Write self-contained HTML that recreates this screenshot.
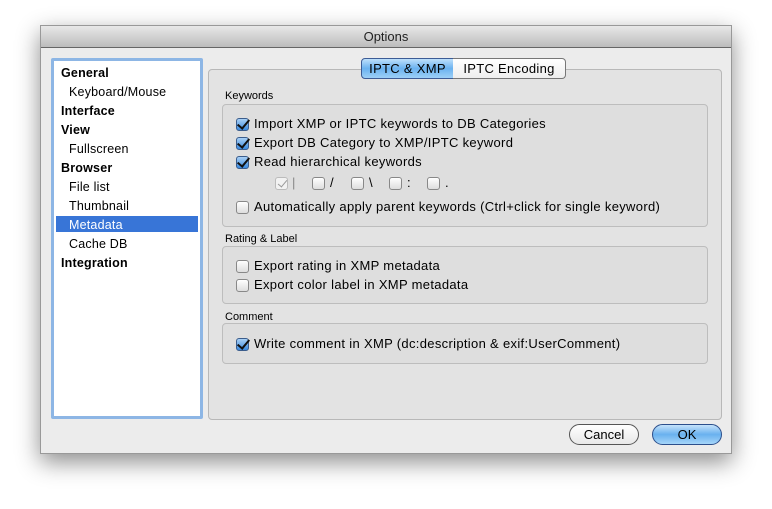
<!DOCTYPE html>
<html><head><style>
*{margin:0;padding:0;box-sizing:border-box}
body{width:772px;height:509px;background:#fff;position:relative;overflow:hidden;font-family:"Liberation Sans",sans-serif;font-size:13px;color:#000}
.win{position:absolute;left:40px;top:25px;width:692px;height:429px;background:#ececec;box-shadow:0 8px 22px rgba(0,0,0,.45);border:1px solid #999}
.title{position:absolute;left:0;top:0;width:100%;height:22px;background:linear-gradient(#e8e8e8,#bcbcbc);border-bottom:1px solid #666;text-align:center;line-height:22px;font-size:13px;color:#222}
.a{position:absolute;white-space:nowrap}
.side{position:absolute;left:10px;top:32px;width:152px;height:361px;background:#fff;border:3px solid #8db6e5;border-radius:2px}
.side div{position:absolute;left:7px;font-size:12.5px;letter-spacing:.2px}
.b{font-weight:bold}
.panel{position:absolute;left:167px;top:43px;width:514px;height:351px;background:#e3e3e3;border:1px solid #b8b8b8;border-radius:4px}
.box{position:absolute;left:13px;width:486px;background:#dedede;border:1px solid #bdbdbd;border-radius:4px}
.lbl{position:absolute;left:16px;font-size:11px}
.cb{position:absolute;width:13px;height:13px;border:1px solid #888;border-radius:3px;background:linear-gradient(#fff,#ddd)}
.cb.on{background:linear-gradient(#a9d0f5,#3a8ae0);border-color:#3b5d8c}
.cb.on::after{content:"";position:absolute;left:3px;top:-2px;width:5px;height:10px;border:solid #111;border-width:0 2.5px 2.5px 0;transform:rotate(40deg)}
.cb.dis::after{content:"";position:absolute;left:4px;top:0;width:4px;height:8px;border:solid #999;border-width:0 1.5px 1.5px 0;transform:rotate(40deg)}
.cb.dis{border-color:#bbb;background:#f2f2f2}
.t{position:absolute;font-size:13px;letter-spacing:.32px;white-space:nowrap}
.btn{position:absolute;height:21px;border-radius:11px;border:1px solid #555;text-align:center;line-height:19px;font-size:13px}
</style></head><body>
<div class="win">
<div class="title">Options</div>
<div class="side">
<div class="b" style="top:5px">General</div>
<div style="top:24px;left:15px">Keyboard/Mouse</div>
<div class="b" style="top:43px">Interface</div>
<div class="b" style="top:62px">View</div>
<div style="top:81px;left:15px">Fullscreen</div>
<div class="b" style="top:100px">Browser</div>
<div style="top:119px;left:15px">File list</div>
<div style="top:138px;left:15px">Thumbnail</div>
<div style="top:155px;left:2px;width:142px;height:16px;background:#3875d7"></div>
<div style="top:157px;left:15px;color:#fff">Metadata</div>
<div style="top:176px;left:15px">Cache DB</div>
<div class="b" style="top:195px">Integration</div>
</div>
<div class="panel">
<div class="lbl" style="top:20px">Keywords</div>
<div class="box" style="top:34px;height:123px"></div>
<div class="lbl" style="top:163px">Rating &amp; Label</div>
<div class="box" style="top:176px;height:58px"></div>
<div class="lbl" style="top:241px">Comment</div>
<div class="box" style="top:253px;height:41px"></div>
</div>
<div class="a" style="left:320px;top:32px;width:93px;height:21px;border:1px solid #3d5c96;border-radius:4px 0 0 4px;background:linear-gradient(#bfe0fb,#6ab2f0 50%,#9dd0f7);text-align:center;line-height:19px;letter-spacing:.3px">IPTC &amp; XMP</div>
<div class="a" style="left:412px;top:32px;width:113px;height:21px;border:1px solid #777;border-left:none;border-radius:0 4px 4px 0;background:linear-gradient(#fff,#eee);text-align:center;line-height:19px;letter-spacing:.3px">IPTC Encoding</div>

<div class="cb on" style="left:195px;top:92px"></div><div class="t" style="left:213px;top:90px">Import XMP or IPTC keywords to DB Categories</div>
<div class="cb on" style="left:195px;top:111px"></div><div class="t" style="left:213px;top:109px">Export DB Category to XMP/IPTC keyword</div>
<div class="cb on" style="left:195px;top:130px"></div><div class="t" style="left:213px;top:128px">Read hierarchical keywords</div>
<div class="cb dis" style="left:234px;top:151px"></div><div class="t" style="left:251px;top:149px;color:#888">|</div>
<div class="cb" style="left:271px;top:151px"></div><div class="t" style="left:289px;top:149px">/</div>
<div class="cb" style="left:310px;top:151px"></div><div class="t" style="left:328px;top:149px">\</div>
<div class="cb" style="left:348px;top:151px"></div><div class="t" style="left:366px;top:149px">:</div>
<div class="cb" style="left:386px;top:151px"></div><div class="t" style="left:404px;top:149px">.</div>
<div class="cb" style="left:195px;top:175px"></div><div class="t" style="left:213px;top:173px">Automatically apply parent keywords (Ctrl+click for single keyword)</div>
<div class="cb" style="left:195px;top:234px"></div><div class="t" style="left:213px;top:232px">Export rating in XMP metadata</div>
<div class="cb" style="left:195px;top:253px"></div><div class="t" style="left:213px;top:251px">Export color label in XMP metadata</div>
<div class="cb on" style="left:195px;top:312px"></div><div class="t" style="left:213px;top:310px">Write comment in XMP (dc:description &amp; exif:UserComment)</div>

<div class="btn" style="left:528px;top:398px;width:70px;background:linear-gradient(#fff,#e8e8e8)">Cancel</div>
<div class="btn" style="left:611px;top:398px;width:70px;border-color:#2c4f8c;background:linear-gradient(#c6e3fb,#69b1ef 50%,#a6d6f9)">OK</div>
</div>
</body></html>
